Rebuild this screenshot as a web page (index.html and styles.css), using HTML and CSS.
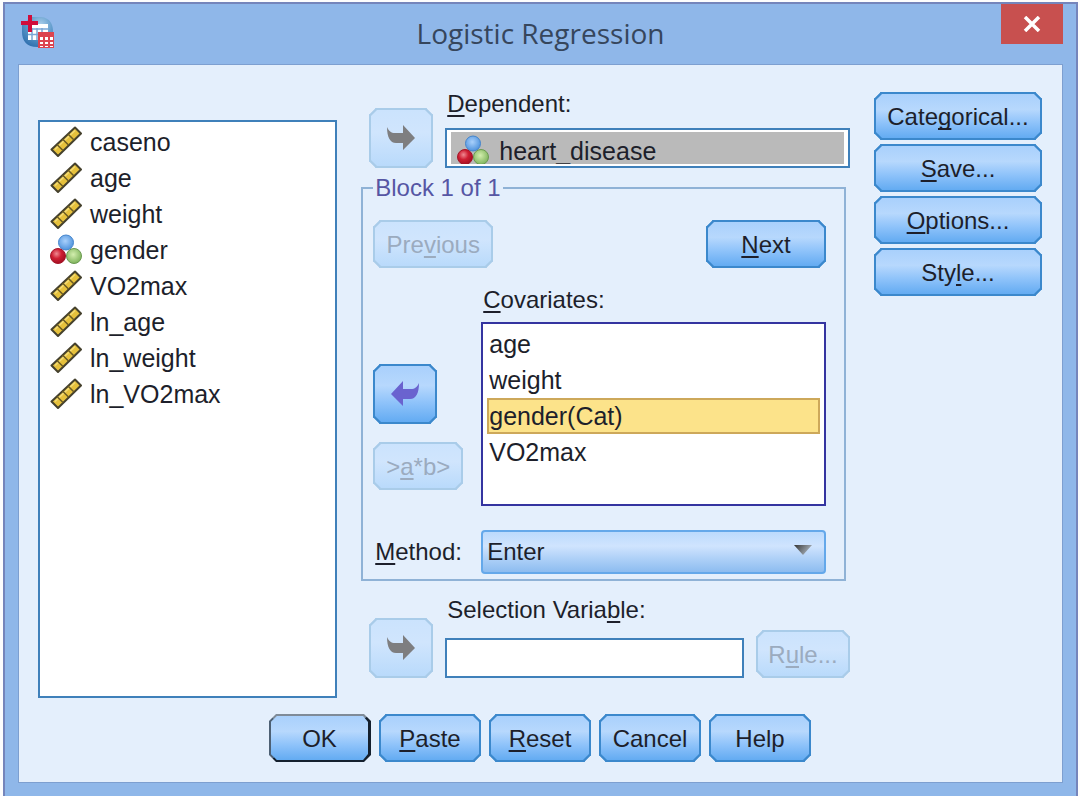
FILE: index.html
```html
<!DOCTYPE html>
<html lang="en">
  <head>
    <meta charset="utf-8" />
    <title>Logistic Regression</title>
    <link rel="stylesheet" href="styles.css">
  </head>

  <body>

    <!-- Shared icons -->
    <svg class="sprite" width="0" height="0" aria-hidden="true">
      <defs>
        <radialGradient id="blue" cx="45%" cy="40%" r="60%">
          <stop offset="0" stop-color="#a9d0fb" />
          <stop offset="1" stop-color="#4f93dd" />
        </radialGradient>
        <radialGradient id="red" cx="40%" cy="35%" r="65%">
          <stop offset="0" stop-color="#ef8a92" />
          <stop offset="0.5" stop-color="#cf1f33" />
          <stop offset="1" stop-color="#a30f22" />
        </radialGradient>
        <radialGradient id="green" cx="45%" cy="40%" r="60%">
          <stop offset="0" stop-color="#d3eeae" />
          <stop offset="1" stop-color="#7fb45c" />
        </radialGradient>
        <radialGradient id="globe" cx="60%" cy="25%" r="80%">
          <stop offset="0" stop-color="#a8cdea" />
          <stop offset="0.5" stop-color="#5e9acb" />
          <stop offset="1" stop-color="#2f6fae" />
        </radialGradient>
        <linearGradient id="tri" x1="0" y1="0" x2="1" y2="0.4">
          <stop offset="0" stop-color="#333" />
          <stop offset="1" stop-color="#a9b3bd" />
        </linearGradient>
      </defs>
      <symbol id="scale" viewBox="0 0 32 32">
        <path d="M1.500 23.500 L25 1.500 L31 7.500 L8 30 Z" fill="#e6c13c" stroke="#45412d" stroke-width="2" stroke-linejoin="round" />
        <path d="M5 23.500 L25 4.500" stroke="#f3dc78" stroke-width="1.500" />
        <path d="M7 18.500 L13 24.500 M12.500 13 L18.500 19 M18 8 L24 14" stroke="#6b5b22" stroke-width="1.500" />
      </symbol>
      <symbol id="nominal" viewBox="0 0 32 32">
        <circle cx="16" cy="8.500" r="7.500" fill="url(#blue)" stroke="#4585cc" />
        <circle cx="8" cy="22" r="7.500" fill="url(#red)" stroke="#a51528" />
        <circle cx="24" cy="22" r="7.500" fill="url(#green)" stroke="#6b9a52" />
      </symbol>
      <symbol id="arrow" viewBox="0 0 28 26">
        <path d="M0 2 C2 6 4 8 8 8 L16 8 L16 0 L28 13 L16 25 L16 18 L9 18 C3 18 0 12 0 2 Z" />
      </symbol>
    </svg>

    <div class="window">
      <header class="titlebar">
        <svg class="app-icon" viewBox="0 0 34 34" aria-hidden="true">
          <path d="M11 2 H20 C29 3 32 9 32 17 V32 H16 C6 32 1 26 1 17 V10 Z" fill="url(#globe)" />
          <path d="M7 9 H27 V25 H7 Z" fill="#fff" />
          <path d="M7 14 H27 M7 19.500 H27 M11 13 V25 M16 13 V25 M21 13 V25" stroke="#7aa6d6" stroke-width="1.500" />
          <path d="M9 0 V17 M0 8 H17" stroke="#d00d3c" stroke-width="4" />
          <path d="M17 17 H33 V33 H17 Z" fill="#dc4450" />
          <path d="M19 22 H32 V32 H19 Z" fill="#fff" />
          <path d="M18 26 H33 M18 30 H33 M23 22 V33 M28 22 V33" stroke="#dc4450" stroke-width="2" />
        </svg>
        <h1>Logistic Regression</h1>
        <button class="close" aria-label="Close">
          <svg width="18" height="16" viewBox="0 0 18 16"><path d="M2 1 L16 15 M16 1 L2 15" stroke="#fff" stroke-width="3.500" /></svg>
        </button>
      </header>

      <main class="client">
        <div class="panels">

          <ul class="list source" role="listbox" aria-label="Variables">
            <li role="option"><svg class="icon"><use href="#scale" /></svg>caseno</li>
            <li role="option"><svg class="icon"><use href="#scale" /></svg>age</li>
            <li role="option"><svg class="icon"><use href="#scale" /></svg>weight</li>
            <li role="option"><svg class="icon"><use href="#nominal" /></svg>gender</li>
            <li role="option"><svg class="icon"><use href="#scale" /></svg>VO2max</li>
            <li role="option"><svg class="icon"><use href="#scale" /></svg>ln_age</li>
            <li role="option"><svg class="icon"><use href="#scale" /></svg>ln_weight</li>
            <li role="option"><svg class="icon"><use href="#scale" /></svg>ln_VO2max</li>
          </ul>

          <div class="center">
            <div class="row">
              <button class="btn move" disabled aria-label="Move to dependent"><svg class="arrow"><use href="#arrow" /></svg></button>
              <div class="field">
                <span class="label" id="depLabel"><u>D</u>ependent:</span>
                <div class="box dependent" role="group" aria-labelledby="depLabel">
                  <div class="target"><svg class="icon"><use href="#nominal" /></svg>heart_disease</div>
                </div>
              </div>
            </div>

            <fieldset class="block">
              <legend>Block 1 of 1</legend>
              <div class="nav">
                <button class="btn" disabled>Pre<u>v</u>ious</button>
                <button class="btn"><u>N</u>ext</button>
              </div>
              <div class="covariates">
                <div class="side">
                  <button class="btn move back" aria-label="Remove covariate"><svg class="arrow"><use href="#arrow" /></svg></button>
                  <button class="btn interaction" disabled>&gt;<u>a</u>*b&gt;</button>
                </div>
                <div class="field">
                  <span class="label" id="covLabel"><u>C</u>ovariates:</span>
                  <ul class="list target-list" role="listbox" aria-labelledby="covLabel">
                    <li role="option">age</li>
                    <li role="option">weight</li>
                    <li role="option" class="selected" aria-selected="true">gender(Cat)</li>
                    <li role="option">VO2max</li>
                  </ul>
                </div>
              </div>
              <div class="method">
                <label for="method"><u>M</u>ethod:</label>
                <div class="dropdown">
                  <select id="method">
                    <option>Enter</option>
                  </select>
                  <svg class="caret" width="18" height="10" viewBox="0 0 18 10"><path d="M0 0 H18 L9 10 Z" fill="url(#tri)" /></svg>
                </div>
              </div>
            </fieldset>

            <div class="row selection">
              <button class="btn move" disabled aria-label="Move to selection variable"><svg class="arrow"><use href="#arrow" /></svg></button>
              <div class="field">
                <label class="label" for="selVar">Selection Varia<u>b</u>le:</label>
                <input class="box" id="selVar" type="text">
              </div>
              <button class="btn rule" disabled>R<u>u</u>le...</button>
            </div>
          </div>

          <div class="options">
            <button class="btn">Cate<u>g</u>orical...</button>
            <button class="btn"><u>S</u>ave...</button>
            <button class="btn"><u>O</u>ptions...</button>
            <button class="btn">Sty<u>l</u>e...</button>
          </div>
        </div>

        <footer class="actions">
          <button class="btn default">OK</button>
          <button class="btn"><u>P</u>aste</button>
          <button class="btn"><u>R</u>eset</button>
          <button class="btn">Cancel</button>
          <button class="btn">Help</button>
        </footer>
      </main>
    </div>
  </body>
</html>
```

FILE: styles.css
```css
* {
  box-sizing: border-box;
}

body {
  margin: 0;
  padding: 2px 2px 0 3px;
  background: #fdfdfd;
  color: #1d1f2b;
  font-family: "Liberation Sans", Arial, sans-serif;
  font-size: 24px;
  line-height: 24px;
}

button, input, select {
  font: inherit;
  color: inherit;
}

u {
  text-decoration-thickness: 2px;
  text-underline-offset: 3px;
  text-decoration-skip-ink: none;
}

.sprite {
  display: block;
}

.window {
  min-height: calc(100vh - 2px);
  padding: 0 13px 12px;
  background: #8fb7e9;
  border: 2px solid #7585bb;
  border-bottom: 0;
}

/* Title bar */
.titlebar {
  display: grid;
  grid-template-columns: 62px 1fr 62px;
  height: 60px;
}

.app-icon {
  width: 34px;
  height: 34px;
  margin: 11px 0 0 3px;
}

.titlebar h1 {
  margin: 0;
  font-family: "Open Sans", sans-serif;
  font-size: 28px;
  font-weight: 400;
  line-height: 58px;
  text-align: center;
  color: #36465c;
}

.close {
  display: flex;
  align-items: center;
  justify-content: center;
  height: 40px;
  padding: 0;
  background: #c8504f;
  border: 0;
}

/* Dialog body */
.client {
  padding: 27px 20px 20px 19px;
  background: #e4effc;
  border: 1px solid #7d9fd0;
}

.panels {
  display: grid;
  grid-template-columns: 300fr 490fr 168px;
  column-gap: 24px;
}

.list {
  margin: 0;
  padding: 2px;
  list-style: none;
  background: #fff;
  border: 2px solid #3f80ba;
  font-size: 25px;
}

.list li {
  display: flex;
  align-items: center;
  height: 36px;
}

.source {
  margin-top: 28px;
}

.source li {
  padding-left: 8px;
  gap: 8px;
}

.icon {
  flex: none;
  width: 32px;
  height: 32px;
}

.center {
  display: flex;
  flex-direction: column;
  padding-bottom: 20px;
}

.row {
  display: flex;
  align-items: flex-end;
  gap: 12px;
  padding-left: 8px;
}

.field {
  display: flex;
  flex: 1;
  flex-direction: column;
  min-width: 0;
}

.label {
  margin: 0 2px 12px;
}

.box {
  width: 100%;
  height: 40px;
  padding: 2px 4px;
  background: #fff;
  border: 2px solid #3f80ba;
}

.target {
  display: flex;
  align-items: center;
  gap: 10px;
  height: 32px;
  padding: 6px 0 0 6px;
  overflow: hidden;
  background: #bababa;
  font-size: 25px;
}

/* Block group */
.block {
  min-width: 0;
  margin: 8px 4px 0 0;
  padding: 20px 18px 5px 10px;
  border: 2px solid #8fb2d6;
}

.block legend {
  padding: 0 2px;
  color: #5656a4;
}

.nav {
  display: flex;
  justify-content: space-between;
}

.nav .btn {
  width: 120px;
}

.covariates {
  display: flex;
  gap: 18px;
  margin-top: 20px;
}

.covariates .label {
  margin-bottom: 10px;
}

.side {
  display: flex;
  flex-direction: column;
  gap: 18px;
  width: 90px;
  padding-top: 76px;
}

.target-list {
  height: 184px;
  padding: 2px 4px;
  border-color: #3434a0;
}

.target-list li {
  border: 2px solid transparent;
}

.target-list .selected {
  background: #fce38a;
  border-color: #cda85a;
}

.method {
  display: flex;
  align-items: center;
  margin-top: 24px;
}

.method label {
  width: 108px;
  padding-left: 2px;
}

.dropdown {
  position: relative;
  flex: 1;
}

.dropdown select {
  display: block;
  width: 100%;
  height: 44px;
  padding: 0 4px;
  appearance: none;
  background: linear-gradient(#bbdafd, #d0e4fe 35%, #b3d3f8 62%, #8dbcf0);
  border: 2px solid #64a8ea;
  border-radius: 4px;
}

.caret {
  position: absolute;
  top: 15px;
  right: 14px;
  pointer-events: none;
}

.selection {
  margin-top: 17px;
}

.selection .label {
  margin-bottom: 16px;
}

/* Buttons */
.btn {
  height: 48px;
  padding: 2px 0 0;
  background: linear-gradient(#a9d0fc, #b7d8fd 35%, #8fc3fa 65%, #63abf2);
  border: 2px solid #3b88cc;
  border-radius: 7px;
  corner-shape: bevel;
}

.btn:disabled {
  color: #9babbf;
  background: linear-gradient(#cbe3fd, #d0e5fd 40%, #b9dafb);
  border-color: #a9cce9;
}

.move {
  display: flex;
  align-items: center;
  justify-content: center;
  width: 64px;
  height: 60px;
  padding: 0;
}

.arrow {
  width: 28px;
  height: 26px;
  fill: #7e7e80;
}

.back .arrow {
  fill: #6a63cf;
  transform: scaleX(-1);
}

.rule {
  width: 94px;
}

.options {
  display: flex;
  flex-direction: column;
  gap: 4px;
}

.actions {
  display: flex;
  justify-content: center;
  gap: 8px;
  margin-top: 16px;
}

.actions .btn {
  width: 102px;
}

.actions .default {
  border-color: #7f8b98 #14202e #14202e #4d6074;
  border-right-width: 3px;
}
```
